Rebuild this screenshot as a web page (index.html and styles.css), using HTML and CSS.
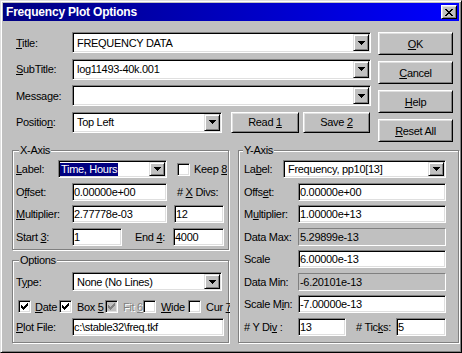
FILE: index.html
```html
<!DOCTYPE html>
<html lang="en">
<head>
  <meta charset="UTF-8">
  <title>Frequency Plot Options</title>
  <link rel="stylesheet" href="styles.css">
</head>
<body>
  <div class="window">

    <div class="titlebar">
      <span class="title">Frequency Plot Options</span>
      <button class="close-btn">
        <svg width="8" height="7" viewBox="0 0 8 7"><path d="M0 0h2v1H0zM6 0h2v1H6zM1 1h2v1H1zM5 1h2v1H5zM2 2h4v1H2zM3 3h2v1H3zM2 4h4v1H2zM1 5h2v1H1zM5 5h2v1H5zM0 6h2v1H0zM6 6h2v1H6z"/></svg>
      </button>
    </div>

    <div class="content">

      <div class="top">
        <div class="main-fields">
          <div class="row main-row">
            <span class="lbl lbl-main"><u>T</u>itle:</span>
            <div class="combo combo-big">
              <span class="combo-text">FREQUENCY DATA</span>
              <span class="drop"><svg width="7" height="4" viewBox="0 0 7 4"><path d="M0 0h7v1H0zM1 1h5v1H1zM2 2h3v1H2zM3 3h1v1H3z"/></svg></span>
            </div>
          </div>
          <div class="row main-row">
            <span class="lbl lbl-main"><u>S</u>ubTitle:</span>
            <div class="combo combo-big">
              <span class="combo-text">log11493-40k.001</span>
              <span class="drop"><svg width="7" height="4" viewBox="0 0 7 4"><path d="M0 0h7v1H0zM1 1h5v1H1zM2 2h3v1H2zM3 3h1v1H3z"/></svg></span>
            </div>
          </div>
          <div class="row main-row">
            <span class="lbl lbl-main">Message:</span>
            <div class="combo combo-big">
              <span class="combo-text"></span>
              <span class="drop"><svg width="7" height="4" viewBox="0 0 7 4"><path d="M0 0h7v1H0zM1 1h5v1H1zM2 2h3v1H2zM3 3h1v1H3z"/></svg></span>
            </div>
          </div>
          <div class="row main-row">
            <span class="lbl lbl-main">Positio<u>n</u>:</span>
            <div class="combo combo-pos">
              <span class="combo-text">Top Left</span>
              <span class="drop"><svg width="7" height="4" viewBox="0 0 7 4"><path d="M0 0h7v1H0zM1 1h5v1H1zM2 2h3v1H2zM3 3h1v1H3z"/></svg></span>
            </div>
            <button class="btn btn-read">Read <u>1</u></button>
            <button class="btn btn-save">Save <u>2</u></button>
          </div>
        </div>

        <div class="side-buttons">
          <button class="btn btn-side"><u>O</u>K</button>
          <button class="btn btn-side"><u>C</u>ancel</button>
          <button class="btn btn-side"><u>H</u>elp</button>
          <button class="btn btn-side"><u>R</u>eset All</button>
        </div>
      </div>

      <div class="groups">
        <div class="left-col">

          <fieldset class="group x-axis">
            <legend>X-Axis</legend>
            <div class="row">
              <span class="lbl x-lbl-short"><u>L</u>abel:</span>
              <div class="combo combo-x">
                <span class="combo-text"><span class="sel">Time, Hours</span></span>
                <span class="drop"><svg width="7" height="4" viewBox="0 0 7 4"><path d="M0 0h7v1H0zM1 1h5v1H1zM2 2h3v1H2zM3 3h1v1H3z"/></svg></span>
              </div>
              <span class="checkline keep">
                <span class="check"></span>
                <span class="check-text">Keep <u>8</u></span>
              </span>
            </div>
            <div class="row">
              <span class="lbl x-lbl">O<u>f</u>fset:</span>
              <div class="field x-field">0.00000e+00</div>
              <span class="lbl divs"># <u>X</u> Divs:</span>
            </div>
            <div class="row">
              <span class="lbl x-lbl"><u>M</u>ultiplier:</span>
              <div class="field x-field">2.77778e-03</div>
              <div class="field x-divs">12</div>
            </div>
            <div class="row">
              <span class="lbl x-lbl">Start <u>3</u>:</span>
              <div class="field x-start">1</div>
              <span class="lbl end-lbl">End <u>4</u>:</span>
              <div class="field x-end">4000</div>
            </div>
          </fieldset>

          <fieldset class="group options">
            <legend>Options</legend>
            <div class="row">
              <span class="lbl x-lbl">T<u>y</u>pe:</span>
              <div class="combo combo-type">
                <span class="combo-text">None (No Lines)</span>
                <span class="drop"><svg width="7" height="4" viewBox="0 0 7 4"><path d="M0 0h7v1H0zM1 1h5v1H1zM2 2h3v1H2zM3 3h1v1H3z"/></svg></span>
              </div>
            </div>
            <div class="row check-row">
              <span class="checkline cb-date">
                <span class="check"><svg width="7" height="7" viewBox="0 0 7 7"><path d="M6 0h1v1H6zM5 1h2v1H5zM0 2h1v1H0zM4 2h3v1H4zM0 3h2v1H0zM3 3h3v1H3zM0 4h5v1H0zM1 5h3v1H1zM2 6h1v1H2z"/></svg></span>
                <span class="check-text"><u>D</u>ate</span>
              </span>
              <span class="checkline cb-box">
                <span class="check"><svg width="7" height="7" viewBox="0 0 7 7"><path d="M6 0h1v1H6zM5 1h2v1H5zM0 2h1v1H0zM4 2h3v1H4zM0 3h2v1H0zM3 3h3v1H3zM0 4h5v1H0zM1 5h3v1H1zM2 6h1v1H2z"/></svg></span>
                <span class="check-text">Box <u>5</u></span>
              </span>
              <span class="checkline cb-fit disabled">
                <span class="check"><svg width="7" height="7" viewBox="0 0 7 7"><path d="M6 0h1v1H6zM5 1h2v1H5zM0 2h1v1H0zM4 2h3v1H4zM0 3h2v1H0zM3 3h3v1H3zM0 4h5v1H0zM1 5h3v1H1zM2 6h1v1H2z"/></svg></span>
                <span class="check-text">Fit <u>6</u></span>
              </span>
              <span class="checkline cb-wide">
                <span class="check"></span>
                <span class="check-text"><u>W</u>ide</span>
              </span>
              <span class="checkline cb-cur">
                <span class="check"></span>
                <span class="check-text">Cur <u>7</u></span>
              </span>
            </div>
            <div class="row plot-row">
              <span class="lbl x-lbl"><u>P</u>lot File:</span>
              <div class="field plot-field">c:\stable32\freq.tkf</div>
            </div>
          </fieldset>

        </div>

        <fieldset class="group y-axis">
          <legend>Y-Axis</legend>
          <div class="row">
            <span class="lbl y-lbl-short">La<u>b</u>el:</span>
            <div class="combo combo-y">
              <span class="combo-text">Frequency, pp10[13]</span>
              <span class="drop"><svg width="7" height="4" viewBox="0 0 7 4"><path d="M0 0h7v1H0zM1 1h5v1H1zM2 2h3v1H2zM3 3h1v1H3z"/></svg></span>
            </div>
          </div>
          <div class="row">
            <span class="lbl y-lbl">Offs<u>e</u>t:</span>
            <div class="field y-field">0.00000e+00</div>
          </div>
          <div class="row">
            <span class="lbl y-lbl">M<u>u</u>ltiplier:</span>
            <div class="field y-field">1.00000e+13</div>
          </div>
          <div class="row">
            <span class="lbl y-lbl">Data Max:</span>
            <div class="field y-field readonly">5.29899e-13</div>
          </div>
          <div class="row">
            <span class="lbl y-lbl">Scale</span>
            <div class="field y-field">6.00000e-13</div>
          </div>
          <div class="row">
            <span class="lbl y-lbl">Data Min:</span>
            <div class="field y-field readonly">-6.20101e-13</div>
          </div>
          <div class="row">
            <span class="lbl y-lbl">Scale M<u>i</u>n:</span>
            <div class="field y-field">-7.00000e-13</div>
          </div>
          <div class="row">
            <span class="lbl y-lbl"># Y Di<u>v</u> :</span>
            <div class="field y-div">13</div>
            <span class="lbl ticks-lbl"># Tic<u>k</u>s:</span>
            <div class="field y-ticks">5</div>
          </div>
        </fieldset>
      </div>

    </div>
  </div>
</body>
</html>
```

FILE: styles.css
```css
* {
  box-sizing: border-box;
}

body {
  margin: 0;
  font-family: "Liberation Sans", Arial, sans-serif;
  font-size: 11px;
  letter-spacing: -0.3px;
  color: #000;
  background-color: #c0c0c0;
  overflow: hidden;
}

.window {
  width: 462px;
  height: 353px;
  padding: 2px;
  background-color: #c0c0c0;
  border: 1px solid;
  border-color: #dfdfdf #000 #000 #dfdfdf;
  box-shadow: inset 1px 1px #fff, inset -1px -1px #808080;
}

/* title bar */
.titlebar {
  height: 18px;
  display: flex;
  align-items: center;
  justify-content: space-between;
  padding: 0 2px 0 3px;
  background: linear-gradient(to right, #000080, #0000ff);
  color: #fff;
}

.title {
  font-size: 12px;
  font-weight: bold;
  letter-spacing: -0.2px;
}

.close-btn {
  width: 16px;
  height: 14px;
  padding: 0;
  display: flex;
  align-items: center;
  justify-content: center;
  background-color: #c0c0c0;
  border: 1px solid;
  border-color: #fff #000 #000 #fff;
  box-shadow: inset 1px 1px #dfdfdf, inset -1px -1px #808080;
}

/* common controls */
.row {
  display: flex;
  align-items: center;
}

.lbl {
  white-space: nowrap;
  flex-shrink: 0;
}

.btn {
  padding: 0;
  font-family: inherit;
  font-size: 11px;
  letter-spacing: -0.3px;
  color: #000;
  background-color: #c0c0c0;
  border: 1px solid;
  border-color: #fff #000 #000 #fff;
  box-shadow: inset 1px 1px #dfdfdf, inset -1px -1px #808080;
}

.field {
  height: 18px;
  padding: 0 1px;
  display: flex;
  align-items: center;
  flex-shrink: 0;
  white-space: nowrap;
  overflow: hidden;
  background-color: #fff;
  border: 1px solid;
  border-color: #808080 #fff #fff #808080;
  box-shadow: inset 1px 1px #000, inset -1px -1px #dfdfdf;
}

.field.readonly {
  background-color: #c0c0c0;
  box-shadow: none;
}

.combo {
  height: 18px;
  padding: 1px;
  display: flex;
  flex-shrink: 0;
  background-color: #fff;
  border: 1px solid;
  border-color: #808080 #fff #fff #808080;
  box-shadow: inset 1px 1px #000, inset -1px -1px #dfdfdf;
}

.combo-text {
  flex: 1;
  display: flex;
  align-items: center;
  padding-left: 3px;
  white-space: nowrap;
  overflow: hidden;
}

.sel {
  margin-left: -3px;
  padding: 0 1px;
  line-height: 13px;
  background-color: #000080;
  color: #fff;
}

.drop {
  width: 16px;
  display: flex;
  align-items: center;
  justify-content: center;
  background-color: #c0c0c0;
  border: 1px solid;
  border-color: #dfdfdf #000 #000 #dfdfdf;
  box-shadow: inset 1px 1px #fff, inset -1px -1px #808080;
}

.checkline {
  display: flex;
  align-items: center;
  gap: 4px;
  flex-shrink: 0;
  white-space: nowrap;
  overflow: hidden;
}

.check {
  width: 13px;
  height: 13px;
  flex-shrink: 0;
  display: flex;
  align-items: center;
  justify-content: center;
  background-color: #fff;
  border: 1px solid;
  border-color: #808080 #fff #fff #808080;
  box-shadow: inset 1px 1px #000, inset -1px -1px #dfdfdf;
}

.disabled .check {
  background-color: #c0c0c0;
}

.disabled .check svg {
  fill: #808080;
}

.disabled .check-text {
  color: #808080;
  text-shadow: 1px 1px #fff;
}

/* top part */
.content {
  padding: 11px 0 0 9px;
}

.top {
  display: flex;
  gap: 7px;
  padding-left: 4px;
}

.main-fields {
  width: 355px;
  display: flex;
  flex-direction: column;
  gap: 5.5px;
}

.main-row {
  height: 21px;
}

.lbl-main {
  width: 56px;
}

.main-row .combo {
  height: 21px;
}

.combo-big {
  width: 299px;
}

.combo-pos {
  width: 150px;
}

.btn-read {
  width: 68px;
  height: 21px;
  margin-left: 9px;
}

.btn-save {
  width: 67px;
  height: 21px;
  margin-left: 4px;
}

.side-buttons {
  width: 75px;
  display: flex;
  flex-direction: column;
  gap: 6px;
}

.btn-side {
  height: 23px;
}

/* group boxes */
.groups {
  display: flex;
  gap: 9px;
  margin-top: 1px;
}

.left-col {
  width: 217px;
  display: flex;
  flex-direction: column;
  gap: 3px;
}

.group {
  margin: 0;
  min-width: 0;
  border: 1px solid #808080;
  box-shadow: inset 1px 1px #fff, 1px 1px #fff;
}

.group legend {
  padding: 0 1px;
  margin-left: 3px;
  line-height: 14px;
  background-color: #c0c0c0;
}

.x-axis {
  padding: 3px 3px 3.5px 3px;
  display: flex;
  flex-direction: column;
  gap: 4.5px;
}

.x-axis .row {
  height: 18px;
}

.x-lbl-short {
  width: 42px;
}

.x-lbl {
  width: 56px;
}

.combo-x {
  width: 109px;
}

.keep {
  margin-left: 10px;
}

.x-field {
  width: 95px;
}

.divs {
  margin-left: 10px;
}

.x-divs {
  width: 50px;
  margin-left: 7px;
}

.x-start {
  width: 50px;
}

.end-lbl {
  width: 38px;
  margin-left: 13px;
}

.x-end {
  width: 51px;
}

.options {
  padding: 5px 3px 6px 3px;
}

.combo-type {
  width: 150px;
  height: 19px;
}

.check-row {
  height: 13px;
  margin-top: 9px;
  margin-left: 2px;
}

.cb-date {
  width: 41px;
}

.cb-box {
  width: 46px;
  gap: 5px;
}

.cb-fit {
  width: 38px;
  gap: 5px;
}

.cb-wide {
  width: 45px;
  gap: 5px;
}

.cb-cur {
  width: 42px;
  gap: 5px;
}

.plot-row {
  margin-top: 5px;
}

.plot-field {
  width: 152px;
}

.y-axis {
  flex: 1;
  padding: 3px 5px 0 5px;
  display: flex;
  flex-direction: column;
  gap: 4.5px;
}

.y-axis legend {
  margin-left: -1px;
}

.y-axis .row {
  height: 18px;
}

.y-lbl-short {
  width: 39px;
}

.y-lbl {
  width: 54px;
}

.combo-y {
  width: 163px;
}

.y-field {
  width: 148px;
}

.y-div {
  width: 48px;
}

.ticks-lbl {
  width: 40px;
  margin-left: 10px;
}

.y-ticks {
  width: 50px;
}
```
